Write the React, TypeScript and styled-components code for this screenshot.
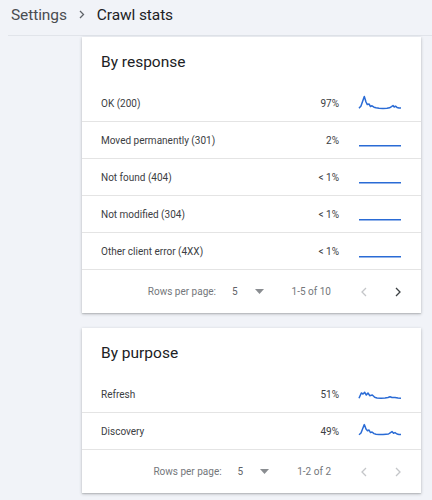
import styled, { createGlobalStyle } from "styled-components";

const GlobalStyle = createGlobalStyle`
  body {
    margin: 0;
    background: #f1f3f8;
    font-family: Roboto, "Liberation Sans", Arial, sans-serif;
    color: #3c4043;
  }
`;

const Page = styled.div`
  width: 432px;
  min-height: 500px;
  background: #f1f3f8;
`;

const Header = styled.header`
  margin-left: 8px;
  padding-left: 3px;
  height: 36px;
  box-sizing: border-box;
  border-bottom: 1px solid #e1e4ea;
  display: flex;
  align-items: center;
  padding-bottom: 6px;
  gap: 12px;
  font-size: 15.5px;
`;

const Crumb = styled.span<{ current?: boolean }>`
  color: ${(p) => (p.current ? "#202124" : "#4a4d51")};
  letter-spacing: -0.1px;
`;

const Content = styled.main`
  padding: 1px 11px 0 82px;
  display: flex;
  flex-direction: column;
  gap: 15px;
`;

const Card = styled.section`
  background: #fff;
  box-shadow: 0 1px 3px rgba(60, 64, 67, 0.3), 0 1px 1px rgba(60, 64, 67, 0.12);
`;

const Title = styled.h2`
  margin: 0;
  height: 48px;
  box-sizing: border-box;
  padding: 16px 19px 0;
  font-size: 15.5px;
  font-weight: 400;
  color: #202124;
`;

const Row = styled.div`
  height: 37px;
  box-sizing: border-box;
  border-bottom: 1px solid #e4e4e4;
  display: flex;
  align-items: center;
  padding: 0 20px 0 19px;
  font-size: 10px;
`;

const Label = styled.span`
  flex: 1;
`;

const Percent = styled.span`
  margin-right: 20px;
  text-align: right;
`;

const Spark = styled.svg`
  width: 42px;
  height: 14px;
  display: block;
  overflow: visible;
`;

const Footer = styled.div`
  height: 43px;
  display: flex;
  align-items: center;
  justify-content: flex-end;
  padding-right: 11px;
  font-size: 10px;
  color: #74777b;
`;

const RowsLabel = styled.span`
  margin-right: 16px;
`;

const RowsValue = styled.span`
  color: #5f6368;
  margin-right: 17px;
`;

const Caret = styled.svg`
  width: 9px;
  height: 5px;
  margin-right: 28px;
`;

const Range = styled.span`
  margin-right: 21px;
`;

const PageButton = styled.button<{ disabled?: boolean }>`
  width: 24px;
  height: 24px;
  border: 0;
  padding: 0;
  background: none;
  display: flex;
  align-items: center;
  justify-content: center;
  color: ${(p) => (p.disabled ? "#c4c6c9" : "#3c4043")};
  & + & {
    margin-left: 10px;
  }
`;

type Item = { label: string; pct: string; line: string };

const FLAT = "M0 12.7 L42 12.7";
const SPIKE =
  "M0 12.3 L2 10 L5.3 0.4 L7 6 L8.3 8.6 L10 8 L11.5 10.5 L13 9.8 L15 11.2 L17 11.8 L20 12.2 L24 12.4 L28 12.3 L30.5 11.8 L32.5 10.6 L34 9.5 L35.2 11 L36.5 10.2 L38 11.4 L40 11.9 L42 12.1";
const SPIKE_2 =
  "M0 10.7 L2 9 L5.3 0.6 L7 5 L8.5 6.8 L10 6 L11.5 8.6 L13 8 L15 9.6 L17 10.2 L20 10.6 L24 10.6 L27 10.2 L29.5 10 L31.5 8.6 L33 7.6 L34.5 9.2 L36 8.6 L38 10 L40 10.4 L42 10.6";
const WAVY =
  "M0 11.3 L2.3 6 L4 7 L5.7 5.3 L7.3 8 L9 6 L10.7 8.7 L13.3 8 L15.7 10.3 L18 11 L22 11.3 L26 11 L29 10.5 L31 9.7 L33 10.5 L36 10.5 L39 11 L42 11.3";

const byResponse: Item[] = [
  { label: "OK (200)", pct: "97%", line: SPIKE },
  { label: "Moved permanently (301)", pct: "2%", line: FLAT },
  { label: "Not found (404)", pct: "< 1%", line: FLAT },
  { label: "Not modified (304)", pct: "< 1%", line: FLAT },
  { label: "Other client error (4XX)", pct: "< 1%", line: FLAT },
];

const byPurpose: Item[] = [
  { label: "Refresh", pct: "51%", line: WAVY },
  { label: "Discovery", pct: "49%", line: SPIKE_2 },
];

const Chevron = ({ dir }: { dir: "left" | "right" }) => (
  <svg width="6" height="10" viewBox="0 0 6 10">
    <polyline
      points={dir === "left" ? "5,1 1,5 5,9" : "1,1 5,5 1,9"}
      fill="none"
      stroke="currentColor"
      strokeWidth="1.3"
    />
  </svg>
);

const StatsCard = ({
  title,
  items,
  range,
  hasNext,
}: {
  title: string;
  items: Item[];
  range: string;
  hasNext: boolean;
}) => (
  <Card>
    <Title>{title}</Title>
    {items.map((item) => (
      <Row key={item.label}>
        <Label>{item.label}</Label>
        <Percent>{item.pct}</Percent>
        <Spark viewBox="0 0 42 14">
          <path d={item.line} fill="none" stroke="#2a6bd5" strokeWidth="1.5" strokeLinejoin="round" />
        </Spark>
      </Row>
    ))}
    <Footer>
      <RowsLabel>Rows per page:</RowsLabel>
      <RowsValue>5</RowsValue>
      <Caret viewBox="0 0 9 5">
        <polygon points="0,0 9,0 4.5,5" fill="#8a8d91" />
      </Caret>
      <Range>{range}</Range>
      <PageButton disabled>
        <Chevron dir="left" />
      </PageButton>
      <PageButton disabled={!hasNext}>
        <Chevron dir="right" />
      </PageButton>
    </Footer>
  </Card>
);

export default function App() {
  return (
    <Page>
      <GlobalStyle />
      <Header>
        <Crumb>Settings</Crumb>
        <svg width="6" height="9" viewBox="0 0 6 9">
          <polyline points="1,1 4.5,4.5 1,8" fill="none" stroke="#5f6368" strokeWidth="1.3" />
        </svg>
        <Crumb current>Crawl stats</Crumb>
      </Header>
      <Content>
        <StatsCard title="By response" items={byResponse} range="1-5 of 10" hasNext />
        <StatsCard title="By purpose" items={byPurpose} range="1-2 of 2" hasNext={false} />
      </Content>
    </Page>
  );
}
